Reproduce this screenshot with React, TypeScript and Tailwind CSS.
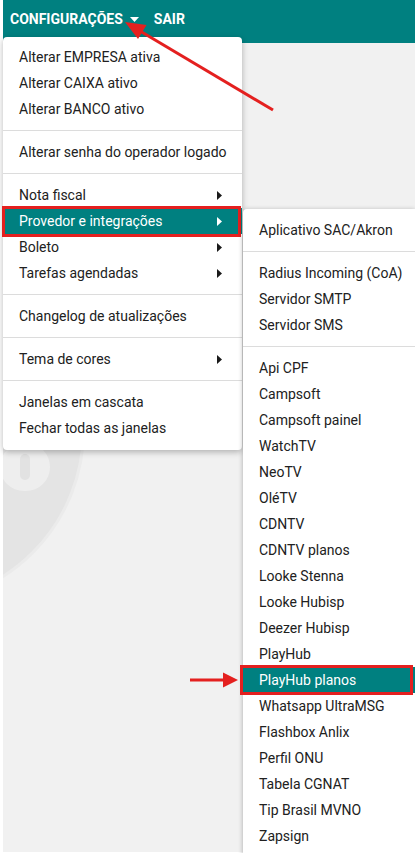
import React from "react";

type Entry = { label?: string; sub?: boolean; active?: boolean; divider?: boolean };

const mainMenu: Entry[] = [
  { label: "Alterar EMPRESA ativa" },
  { label: "Alterar CAIXA ativo" },
  { label: "Alterar BANCO ativo" },
  { divider: true },
  { label: "Alterar senha do operador logado" },
  { divider: true },
  { label: "Nota fiscal", sub: true },
  { label: "Provedor e integrações", sub: true, active: true },
  { label: "Boleto", sub: true },
  { label: "Tarefas agendadas", sub: true },
  { divider: true },
  { label: "Changelog de atualizações" },
  { divider: true },
  { label: "Tema de cores", sub: true },
  { divider: true },
  { label: "Janelas em cascata" },
  { label: "Fechar todas as janelas" },
];

const subMenu: Entry[] = [
  { label: "Aplicativo SAC/Akron" },
  { divider: true },
  { label: "Radius Incoming (CoA)" },
  { label: "Servidor SMTP" },
  { label: "Servidor SMS" },
  { divider: true },
  { label: "Api CPF" },
  { label: "Campsoft" },
  { label: "Campsoft painel" },
  { label: "WatchTV" },
  { label: "NeoTV" },
  { label: "OléTV" },
  { label: "CDNTV" },
  { label: "CDNTV planos" },
  { label: "Looke Stenna" },
  { label: "Looke Hubisp" },
  { label: "Deezer Hubisp" },
  { label: "PlayHub" },
  { label: "PlayHub planos", active: true },
  { label: "Whatsapp UltraMSG" },
  { label: "Flashbox Anlix" },
  { label: "Perfil ONU" },
  { label: "Tabela CGNAT" },
  { label: "Tip Brasil MVNO" },
  { label: "Zapsign" },
];

function RightCaret({ white }: { white?: boolean }) {
  return (
    <svg width="5" height="9" viewBox="0 0 5 9" className="shrink-0">
      <path d="M0 0 L5 4.5 L0 9 Z" fill={white ? "#ffffff" : "#1a1a1a"} />
    </svg>
  );
}

function MenuRows({ items, main }: { items: Entry[]; main?: boolean }) {
  return (
    <>
      {items.map((it, i) =>
        it.divider ? (
          <div key={i} className="my-[8px] h-px bg-[#dcdcdc]" />
        ) : (
          <div
            key={i}
            className={
              "relative flex h-[26px] items-center justify-between pl-[16px] pr-[20px] text-[14px] leading-none " +
              (it.active ? "bg-[#008080] text-white" : "text-[#212121]")
            }
          >
            <span className="whitespace-nowrap">{it.label}</span>
            {it.sub && <RightCaret white={it.active} />}
            {it.active && (
              <div
                className={
                  "pointer-events-none absolute border-[3px] border-[#e4201f] " +
                  (main
                    ? "left-[-1px] right-[1px] top-[-2px] bottom-[-3px]"
                    : "left-[-3px] right-[2px] top-[-2px] bottom-[-2px]")
                }
              />
            )}
          </div>
        )
      )}
    </>
  );
}

export default function App() {
  return (
    <div className="relative h-[853px] w-[415px] overflow-hidden bg-white font-['Roboto','Liberation_Sans',sans-serif]">
      <div className="flex h-[852px] flex-col pl-[3px]">
        <header className="flex h-[37px] shrink-0 items-center bg-[#008080] pl-[7px] pt-[1px] text-[14px] font-bold text-white">
          <span className="flex items-center">
            <span>CONFIGURAÇÕES</span>
            <svg width="9" height="5" viewBox="0 0 9 5" className="ml-[7px]">
              <path d="M0 0 L9 0 L4.5 5 Z" fill="#ffffff" />
            </svg>
          </span>
          <span className="ml-[15px]">SAIR</span>
        </header>
        <div className="h-[6px] shrink-0 bg-[#008080]" />
        <main className="relative flex-1 overflow-hidden bg-[#f1f1f1]">
          <div className="absolute left-[-268px] top-[212px] h-[350px] w-[350px] rounded-full border-[3px] border-[#ebebeb] bg-[#e4e4e4]" />
          <div className="absolute left-[-3px] top-[400px] flex h-[48px] w-[50px] items-center justify-center rounded-full bg-[#eeeeee]">
            <div className="h-[26px] w-[10px] rounded-full bg-[#e2e2e2]" />
          </div>
        </main>
      </div>

      {/* Main dropdown */}
      <div className="absolute left-[3px] top-[37px] w-[239px] rounded-[4px] bg-white pb-[9px] pt-[7px] shadow-[0_2px_6px_rgba(0,0,0,0.28)]">
        <MenuRows items={mainMenu} main />
      </div>

      {/* Submenu */}
      <div className="absolute left-[243px] top-[209px] w-[172px] rounded-tl-[4px] bg-white pb-[30px] pt-[8px] shadow-[0_1px_5px_rgba(0,0,0,0.3)]">
        <MenuRows items={subMenu} />
      </div>

      {/* Annotation arrows */}
      <svg
        className="pointer-events-none absolute left-0 top-0"
        width="415"
        height="853"
        viewBox="0 0 415 853"
      >
        <line x1="273" y1="110" x2="140" y2="31" stroke="#e4201f" strokeWidth="3" />
        <path d="M125 22 L146.5 25 L138 39 Z" fill="#e4201f" />
        <line x1="190" y1="680" x2="225" y2="680" stroke="#e4201f" strokeWidth="3" />
        <path d="M223 672.5 L238 680 L223 687.5 Z" fill="#e4201f" />
      </svg>
    </div>
  );
}
